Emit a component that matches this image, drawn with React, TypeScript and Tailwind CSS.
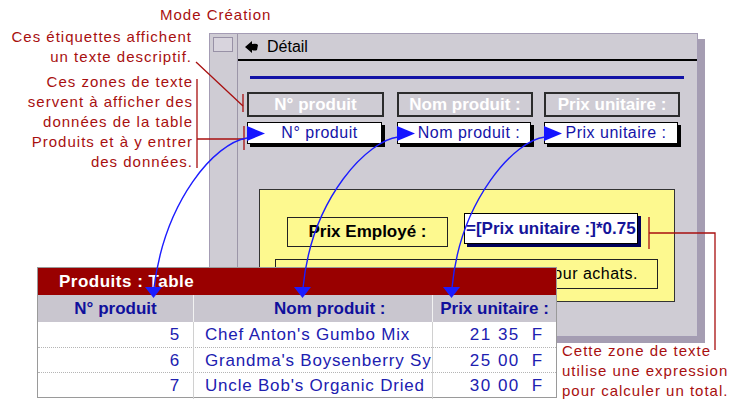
import type { ReactNode } from 'react';

const RED = '#a80f0f';

const rows = [
  { id: '5', name: "Chef Anton's Gumbo Mix", price: '21 35' },
  { id: '6', name: "Grandma's Boysenberry Sy", price: '25 00' },
  { id: '7', name: "Uncle Bob's Organic Dried", price: '30 00' },
];

export default function App() {
  return (
    <div className="relative w-[729px] h-[403px] overflow-hidden bg-white font-['Liberation_Sans',Arial,sans-serif]">
      <Notes />
      <FormWindow />
      <ProductTable />
      <Connectors />
    </div>
  );
}

function Notes() {
  return (
    <>
      <p className="absolute left-[160px] top-[5px] text-[15px] leading-[20px] tracking-[1px] text-[#a80f0f]">Mode Création</p>
      <p className="absolute right-[537px] top-[27px] text-right text-[15px] leading-[20px] tracking-[1px] text-[#a80f0f]">
        Ces étiquettes affichent<br />un texte descriptif.
      </p>
      <p className="absolute right-[536px] top-[72px] text-right text-[15px] leading-[20px] tracking-[1px] text-[#a80f0f]">
        Ces zones de texte<br />servent à afficher des<br />données de la table<br />Produits et à y entrer<br />des données.
      </p>
      <p className="absolute left-[562px] top-[341px] text-[15px] leading-[20px] tracking-[1px] text-[#a80f0f]">
        Cette zone de texte<br />utilise une expression<br />pour calculer un total.
      </p>
    </>
  );
}

function FormWindow() {
  return (
    <div className="absolute left-[209px] top-[33px] w-[489px] h-[304px] flex border border-[#a49cb4] bg-[#cfccd4] shadow-[7px_6px_0_#a59db2]">
      <div className="w-[28px] shrink-0 border-r border-[#9c96a8] pt-[3px] pl-[3px]">
        <div className="w-[20px] h-[15px] border border-[#9891a6] bg-[#d8d4dd]" />
      </div>
      <div className="flex-1 flex flex-col">
        <div className="h-[27px] border-b-2 border-black flex items-center pl-[7px] gap-[8px]">
          <svg width="14" height="12" viewBox="0 0 14 12">
            <path d="M0 6 L7 0 L7 3 Q12 2 13 4 L12 9 Q10 10 7 9 L7 12 Z" fill="#000" />
          </svg>
          <span className="text-[16px] text-black">Détail</span>
        </div>
        <div className="mt-[15px] ml-[12px] mr-[13px] h-[3px] bg-[#1212a6]" />
        <div className="mt-[13px] ml-[9px] flex">
          <Label w="w-[137px]">N° produit</Label>
          <Label w="w-[136px] ml-[13px]">Nom produit :</Label>
          <Label w="w-[136px] ml-[11px]">Prix unitaire :</Label>
        </div>
        <div className="mt-[5px] ml-[9px] flex">
          <Field w="w-[135px]">N° produit</Field>
          <Field w="w-[134px] ml-[15px]">Nom produit :</Field>
          <Field w="w-[134px] ml-[13px]">Prix unitaire :</Field>
        </div>
        <div className="mt-[45px] ml-[21px] w-[416px] h-[113px] border border-[#333] bg-[#fdf98f] flex flex-col">
          <div className="flex items-start">
            <div className="mt-[27px] ml-[27px] w-[161px] h-[30px] border border-[#222] flex items-center justify-center text-[17px] font-bold text-black">
              Prix Employé :
            </div>
            <div className="mt-[23px] ml-[16px] w-[174px] h-[31px] border border-black bg-white shadow-[3px_3px_0_#00005a] flex items-center pl-[1px] text-[17px] font-bold text-[#14149a] whitespace-nowrap">
              =[Prix unitaire :]*0.75
            </div>
          </div>
          <div className="mt-[12px] ml-[15px] w-[383px] h-[30px] border border-[#222] flex items-center justify-end pr-[19px] text-[16px] tracking-[0.5px] text-black whitespace-nowrap">
            pour achats.
          </div>
        </div>
      </div>
    </div>
  );
}

function Label({ w, children }: { w: string; children: ReactNode }) {
  return (
    <div className={`${w} h-[25px] border-2 border-[#2c2c2c] flex items-center justify-center text-[17px] font-bold text-white whitespace-nowrap`}>
      {children}
    </div>
  );
}

function Field({ w, children }: { w: string; children: ReactNode }) {
  return (
    <div className={`${w} relative h-[22px] border border-black bg-white shadow-[3px_3px_0_#000] flex items-center justify-center pl-[10px] text-[16px] tracking-[0.5px] text-[#1414a8] whitespace-nowrap`}>
      <svg className="absolute left-[-1px] top-[3px]" width="18" height="15" viewBox="0 0 18 15">
        <path d="M0 0 L18 7.5 L0 15 Z" fill="#1414ff" />
      </svg>
      {children}
    </div>
  );
}

function ProductTable() {
  return (
    <div className="absolute left-[37px] top-[267px] w-[520px] border border-[#9a9a9a] bg-white">
      <div className="h-[27px] bg-[#990000] flex items-center pl-[21px] text-[17px] tracking-[0.5px] font-bold text-white">Produits : Table</div>
      <div className="h-[27px] grid grid-cols-[156px_239px_1fr] bg-[#c9c6cf] text-[17px] font-bold text-[#10109c]">
        <div className="flex items-center justify-center border-r border-[#f2f2f2]">N° produit</div>
        <div className="flex items-center pl-[80px] border-r border-[#f2f2f2]">Nom produit :</div>
        <div className="flex items-center justify-center">Prix unitaire :</div>
      </div>
      {rows.map((r, i) => (
        <div
          key={r.id}
          className={`h-[25px] grid grid-cols-[156px_239px_1fr] text-[17px] tracking-[0.8px] text-[#2020b0] ${i > 0 ? 'border-t border-dotted border-[#b5b5b5]' : ''}`}
        >
          <div className="flex items-center justify-end pr-[13px] border-r border-[#d0d0d0]">{r.id}</div>
          <div className="flex items-center pl-[11px] border-r border-[#d0d0d0] whitespace-nowrap">{r.name}</div>
          <div className="flex items-center justify-end pr-[13px] gap-[12px]">
            <span className="tracking-[1.5px]">{r.price}</span>
            <span>F</span>
          </div>
        </div>
      ))}
    </div>
  );
}

function Connectors() {
  const blue = '#1c1cff';
  return (
    <svg className="absolute inset-0 pointer-events-none" width="729" height="403">
      <g stroke={RED} strokeWidth="1.3" fill="none">
        <path d="M196 62 L243 106" />
        <path d="M243 94 V112" />
        <path d="M244 126 V150" />
        <path d="M197 79 V168" />
        <path d="M197 139 H244" />
        <path d="M649 217 V249" />
        <path d="M649 233 H715 V350" />
      </g>
      <g stroke={blue} strokeWidth="1.4" fill="none">
        <path d="M247 138 C215 143 165 200 154 288" />
        <path d="M398 137 C370 140 312 195 303 288" />
        <path d="M545 137 C515 140 460 200 452 288" />
      </g>
      <g fill={blue}>
        <path d="M145 287 H162 L153.5 298 Z" />
        <path d="M294 287 H311 L302.5 298 Z" />
        <path d="M443 287 H460 L451.5 298 Z" />
      </g>
    </svg>
  );
}
